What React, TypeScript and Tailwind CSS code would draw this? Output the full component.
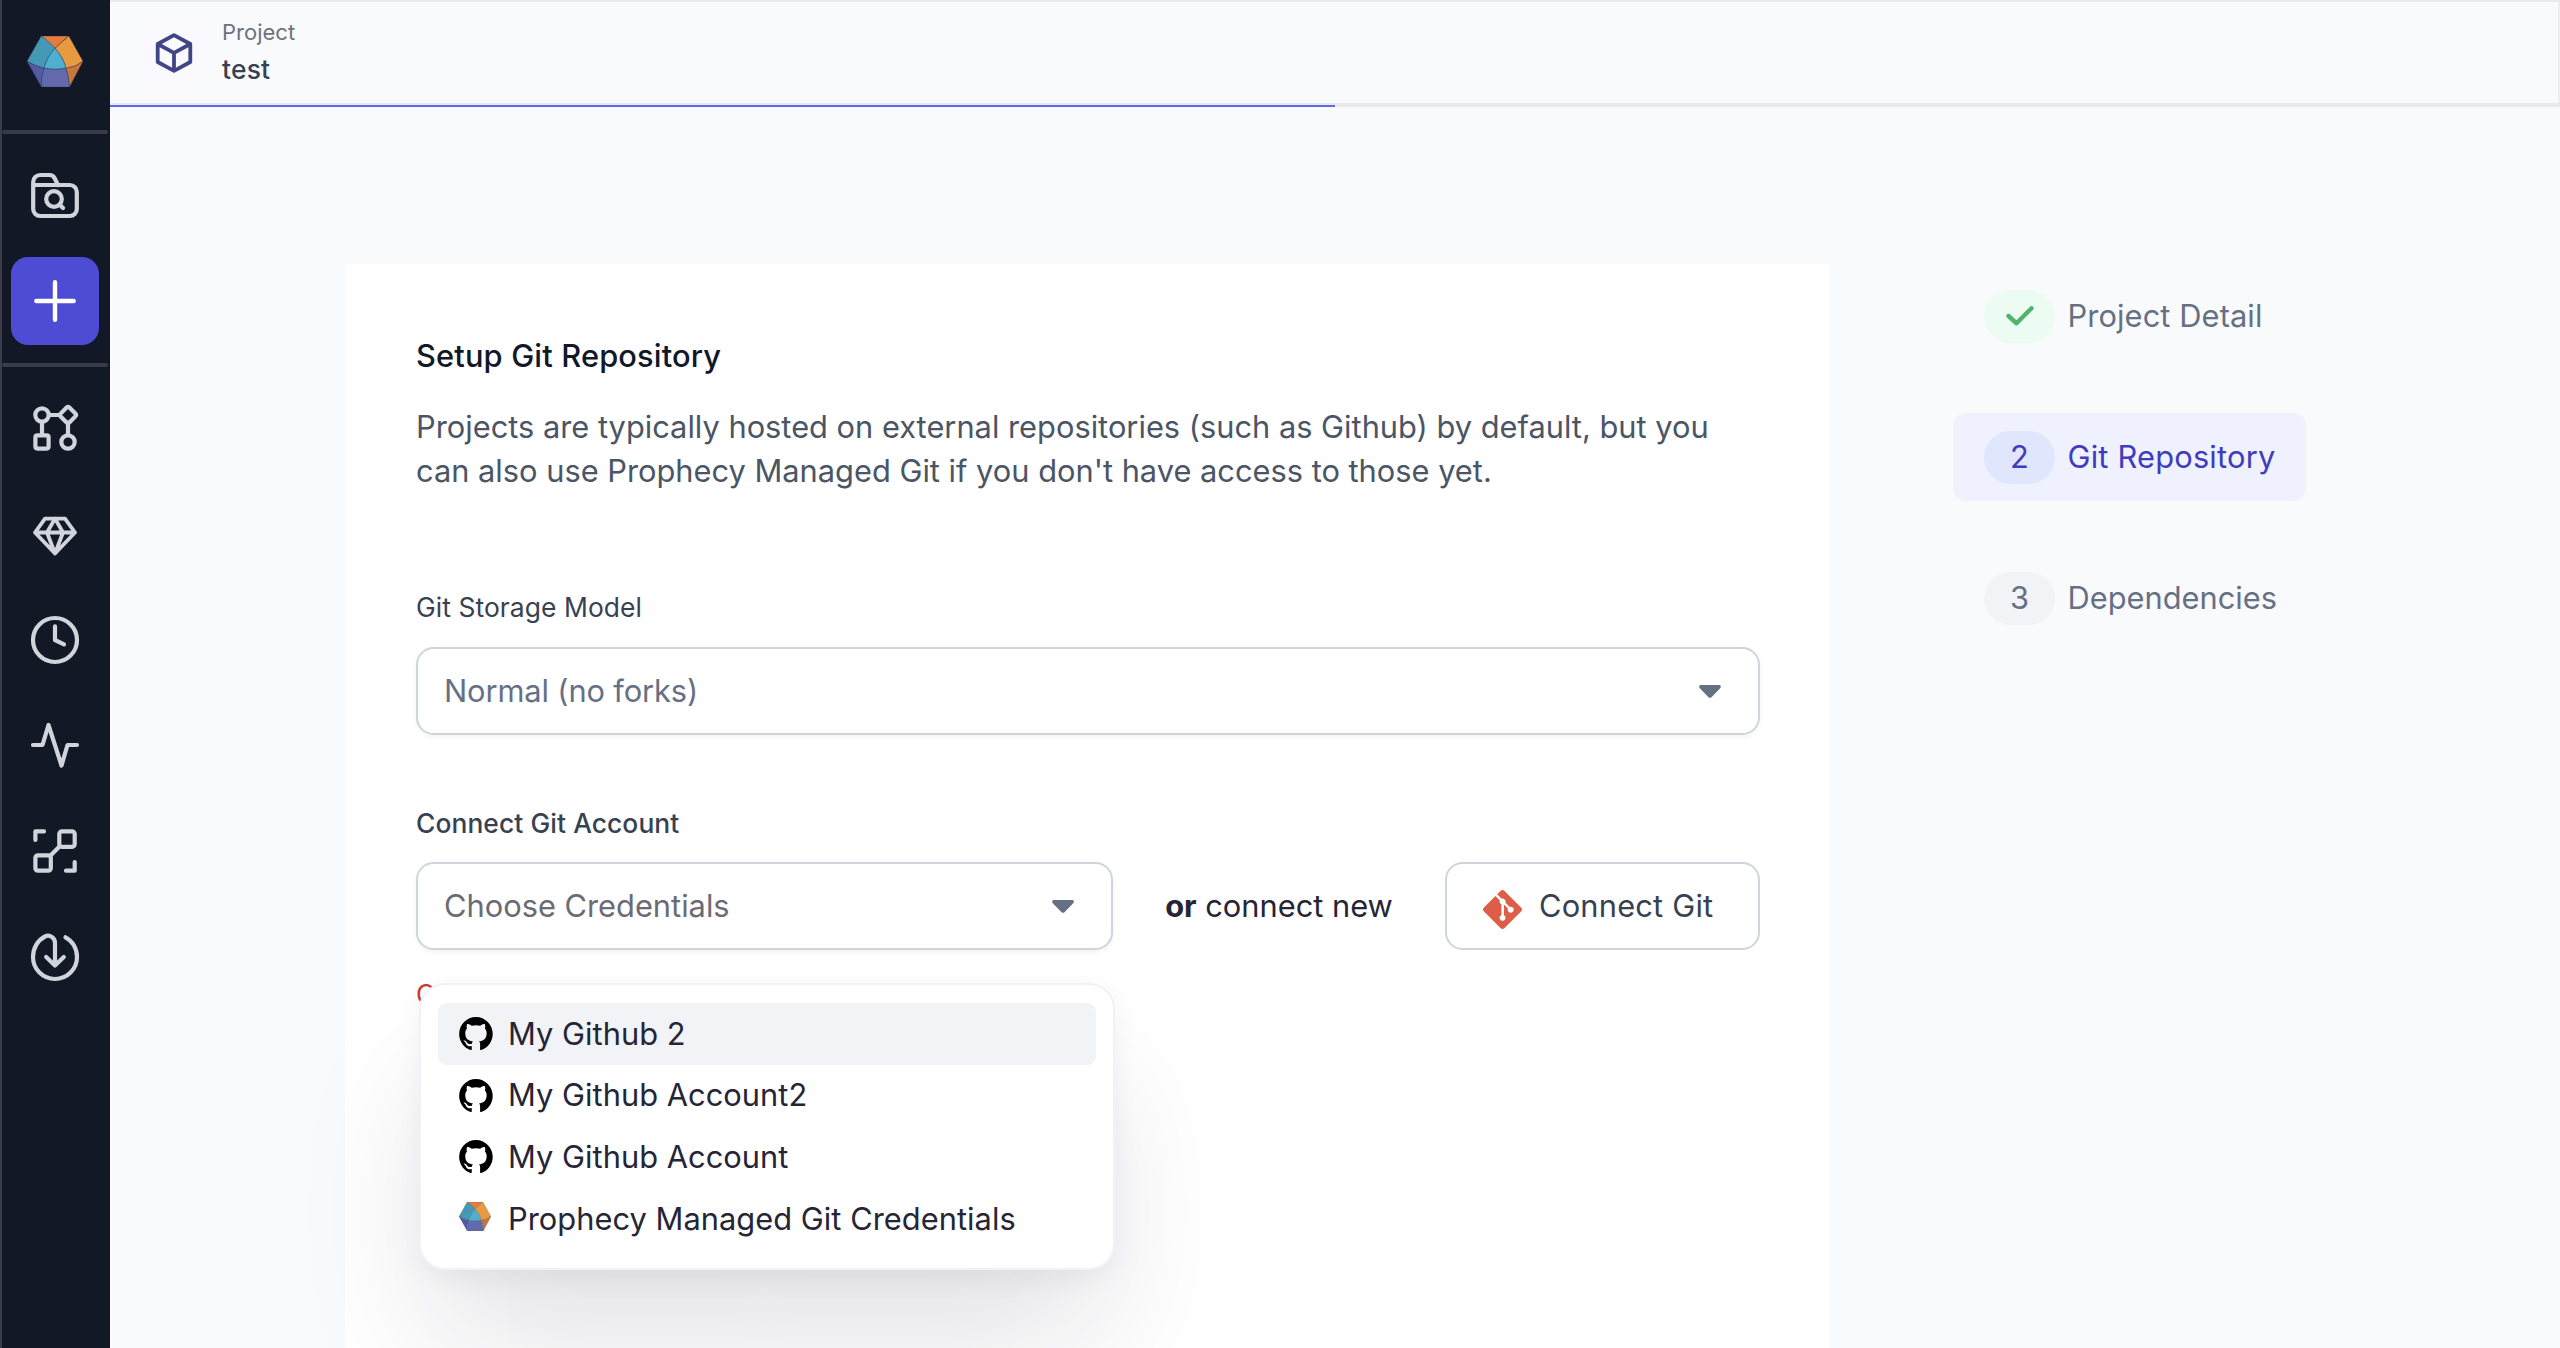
import React from "react";
import { SiGit } from "react-icons/si";

const FONT = "font-['Inter',sans-serif]";

function Logo({ className }: { className: string }) {
  return (
    <svg className={className} viewBox="0 0 56 51">
      <g stroke="#33405f" strokeWidth="0.4" strokeLinejoin="round">
        <path d="M14.5 0H41.5L28 12.3Z" fill="#e47d3c" />
        <path d="M41.8 0L56 25.3Q48 31.5 39 32.2Q36 21 28 12.3Z" fill="#e89a40" />
        <path d="M56 25.3L42.5 51Q42 41 39 32.2Q48 31.5 56 25.3Z" fill="#c9763a" />
        <path d="M14.2 0Q22 5 28 12.3Q20 21 17 32.2Q8 30 0 25.3Z" fill="#4499b5" />
        <path d="M28 12.3Q36 21 39 32.2Q28 34.5 17 32.2Q20 21 28 12.3Z" fill="#4eafd0" />
        <path d="M0 25.3Q8 30 17 32.2Q14 41 14.5 51Z" fill="#5459a5" />
        <path d="M17 32.2Q28 34.5 39 32.2Q42 41 42.5 51H14.5Q14 41 17 32.2Z" fill="#6269ad" />
      </g>
    </svg>
  );
}

function NavIcon({ box, width = 4.2, children }: { box: string; width?: number; children: React.ReactNode }) {
  return (
    <svg
      className="block size-[52px]"
      viewBox={box}
      fill="none"
      stroke="#d1d5db"
      strokeWidth={width}
      strokeLinecap="round"
      strokeLinejoin="round"
    >
      {children}
    </svg>
  );
}

function Sidebar() {
  return (
    <aside className="flex h-full w-[110px] shrink-0 flex-col border-l-2 border-[#3b3e4a] bg-[#131827]">
      <div className="flex h-[130px] w-[106px] justify-center pt-9">
        <Logo className="block h-[51px] w-14" />
      </div>
      <div className="h-1 w-[106px] rounded-sm bg-[#393b48]" />
      <div className="flex h-[229px] w-[106px] flex-col items-center pt-[35px]">
        <NavIcon box="29 169 52 52">
          <path d="M33.2 185V182a7 7 0 0 1 7-7H49.5c2.5 0 4 1 5 3L58 185M33.2 185H69.8a7 7 0 0 1 7 7V209a7 7 0 0 1-7 7H40.2a7 7 0 0 1-7-7Z" />
          <circle cx="54" cy="199" r="7.8" />
          <path d="M60 205L63 208" />
        </NavIcon>
        <button className="mt-9 flex size-[88px] items-center justify-center rounded-[17px] bg-[#4e4bd4]">
          <svg className="block size-[52px]" viewBox="0 0 52 52" stroke="#fff" strokeWidth="4.4" strokeLinecap="round">
            <path d="M26 7.3V44.7M7.3 26H44.7" />
          </svg>
        </button>
      </div>
      <div className="h-1 w-[106px] rounded-sm bg-[#393b48]" />
      <nav className="flex w-[106px] flex-col items-center gap-[53.8px] pt-[35px]">
        <NavIcon box="29 402 52 52">
          <circle cx="42" cy="415" r="6.7" />
          <circle cx="68" cy="442" r="6.7" />
          <rect x="35.4" y="435.4" width="13.2" height="13.2" rx="2" />
          <path d="M66.6 407.6a2 2 0 0 1 2.8 0L75.400 413.600a2 2 0 0 1 0 2.800L69.400 422.400a2 2 0 0 1-2.800 0L60.600 416.400a2 2 0 0 1 0-2.800Z" />
          <path d="M49 415H60M42 422V435M68 422.500V435" />
        </NavIcon>
        <NavIcon box="29 508 52 52" width={3.8}>
          <path d="M45 518.600H65L75 532.500L55 553.500L35 532.500ZM35 532.500H75M55 518.600L47 532.500L55 553.500L63 532.500Z" />
        </NavIcon>
        <NavIcon box="29 613.600 52 52">
          <circle cx="55" cy="639.600" r="22" />
          <path d="M55 626V639.600L64 644" />
        </NavIcon>
        <NavIcon box="29 719.500 52 52">
          <path d="M33 745.500H42.500L48.500 725.500L61.500 766L67.500 745.500H77" />
        </NavIcon>
        <NavIcon box="29 825 52 52">
          <path d="M35.400 840V831.400H44M66 870.700H74.700V862M51 855L59 847" />
          <rect x="59.300" y="831.400" width="15.400" height="15.400" rx="2.500" />
          <rect x="35.400" y="855.300" width="15.400" height="15.400" rx="2.500" />
        </NavIcon>
        <NavIcon box="29 931 52 52">
          <path d="M65.500 937.300C72.500 941 77 948.500 77 957A22 22 0 0 1 33 957C33 948 38 940 45 936.500C50 934 55 938 55 943V965M46.200 957L55 965.500L63.800 957" />
        </NavIcon>
      </nav>
    </aside>
  );
}

function Header() {
  return (
    <header className="h-[107px] shrink-0 border-t-2 border-[#e9eaed]">
      <div className="flex h-[101px] border-r-2 border-[#eceef1] pl-[30px] pt-4">
        <div className="flex size-[68px] items-center justify-center rounded-lg bg-[#f9f9fe]">
          <svg className="mt-[2px] block size-11" viewBox="152 31 44 44" fill="none" stroke="#3f4585" strokeWidth="3.800" strokeLinejoin="round" strokeLinecap="round">
            <path d="M174 35.200L190.300 44V62L174 70.800L157.700 62V44ZM157.700 44L174 52.800L190.300 44M174 52.800V70.800" />
          </svg>
        </div>
        <div className="-mt-1 ml-[14px] flex flex-col">
          <span className="text-[22px] leading-9 text-[#6b7280]">Project</span>
          <span className="text-[26.400px] font-medium leading-[38px] tracking-[0.2px] text-[#374151]">test</span>
        </div>
      </div>
      <div className="flex h-1 items-end border-t-2 border-[#e9eaed]">
        <div className="h-[2px] w-[1225px] bg-[#6468e6]" />
        <div className="h-[2px] flex-1 bg-[#e9eaed]" />
      </div>
    </header>
  );
}

function Caret() {
  return (
    <svg className="block h-[13px] w-[22px]" viewBox="0 0 22 13" fill="#667085">
      <path d="M1.200 0H20.800Q22.500 1 21.400 3L12.500 12.200Q11 13.500 9.500 12.200L0.600 3Q-0.500 1 1.200 0Z" />
    </svg>
  );
}

function Select({ text, className }: { text: string; className: string }) {
  return (
    <div className={"flex h-[88px] items-center justify-between rounded-[17.600px] border-2 border-[#d0d5db] bg-white pl-[26px] pr-[37px] shadow-[0_2px_4px_rgba(16,24,40,0.05)] " + className}>
      <span>{text}</span>
      <Caret />
    </div>
  );
}

function Github() {
  return (
    <svg className="block h-[33px] w-[34px]" viewBox="0 0 98 96" fill="#000">
      <path
        fillRule="evenodd"
        clipRule="evenodd"
        d="M48.854 0C21.839 0 0 22 0 49.217c0 21.756 13.993 40.172 33.405 46.690 2.427.490 3.316-1.059 3.316-2.362 0-1.141-.080-5.052-.080-9.127-13.590 2.934-16.420-5.867-16.420-5.867-2.184-5.704-5.420-7.170-5.420-7.170-4.448-3.015.324-3.015.324-3.015 4.934.326 7.523 5.052 7.523 5.052 4.367 7.496 11.404 5.378 14.235 4.074.404-3.178 1.699-5.378 3.074-6.600-10.839-1.141-22.243-5.378-22.243-24.283 0-5.378 1.940-9.778 5.014-13.200-.485-1.222-2.184-6.275.486-13.038 0 0 4.125-1.304 13.426 5.052a46.970 46.970 0 0 1 12.214-1.630c4.125 0 8.330.571 12.213 1.630 9.302-6.356 13.427-5.052 13.427-5.052 2.670 6.763.970 11.816.485 13.038 3.155 3.422 5.015 7.822 5.015 13.200 0 18.905-11.404 23.060-22.324 24.283 1.780 1.548 3.316 4.481 3.316 9.126 0 6.600-.080 11.897-.080 13.526 0 1.304.890 2.853 3.316 2.364 19.412-6.520 33.405-24.935 33.405-46.691C97.707 22 75.788 0 48.854 0z"
      />
    </svg>
  );
}

const OPTIONS = ["My Github 2", "My Github Account2", "My Github Account", "Prophecy Managed Git Credentials"];

function CredentialMenu() {
  return (
    <div className="absolute left-[3px] top-[6px] w-[696px] rounded-[26px] border-2 border-[#f1f2f7] bg-white px-[17px] pb-[19px] pt-[18px] text-[#252536] shadow-[0_84px_140px_-18px_rgba(26,26,51,0.13),0_10px_26px_rgba(26,26,51,0.05)]">
      {OPTIONS.map((label, i) => (
        <div
          key={label}
          className={"flex h-[61.600px] items-center rounded-[9px] pl-[21px] " + (i === 0 ? "bg-[#f2f3f7]" : "")}
        >
          <div className="w-[49px]">
            {i < 3 ? <Github /> : <Logo className="-mt-[5px] block h-[29px] w-8" />}
          </div>
          <span className="tracking-[0.04px]">{label}</span>
        </div>
      ))}
    </div>
  );
}

function SetupCard() {
  return (
    <section className="w-[1485px] bg-white px-[71px] pt-[69.500px] text-[30.800px] leading-[44px]">
      <h1 className="font-medium tracking-[0.15px] text-[#111827]">Setup Git Repository</h1>
      <p className="mt-[27.500px] whitespace-nowrap text-[#4b5565]">
        Projects are typically hosted on external repositories (such as Github) by default, but you
        <br />
        can also use Prophecy Managed Git if you don't have access to those yet.
      </p>
      <div className="mt-[97px] text-[26.400px] leading-[35px] tracking-[0.08px] text-[#374151]">Git Storage Model</div>
      <Select text="Normal (no forks)" className="mt-[22px] w-[1344px] tracking-[-0.12px] text-[#667085]" />
      <div className="mt-[71px] text-[26.400px] font-medium leading-[35px] tracking-[0.08px] text-[#374151]">Connect Git Account</div>
      <div className="mt-[21px] flex w-[1344px] items-center justify-between">
        <Select text="Choose Credentials" className="w-[697px] text-[#6b6b76]" />
        <span className="whitespace-nowrap text-[#252536]">
          <b className="font-bold">or</b> connect new
        </span>
        <button className="flex h-[88px] w-[315px] items-center rounded-[17.600px] border-2 border-[#d0d5db] bg-white pl-9 text-[#374151]">
          <SiGit className="mt-[6px] block size-[39px] text-[#de5d46]" />
          <span className="ml-[17px] tracking-[0.2px]">Connect Git</span>
        </button>
      </div>
      <div className="relative mt-[27px]">
        <div className="text-[26.400px] leading-[35px] text-[#d0392b]">C</div>
        <CredentialMenu />
      </div>
    </section>
  );
}

function Steps() {
  return (
    <ol className="mt-2 flex w-[353px] flex-col gap-[53px] text-[30.800px] leading-[44px]">
      <li className="flex h-[88px] items-center gap-[12.500px] rounded-[13px] pl-[31px] text-[#667085]">
        <span className="flex h-[53px] w-[71px] items-center justify-center rounded-full bg-[#edfcf3]">
          <svg className="block h-6 w-8" viewBox="2003.500 305.500 32 24" fill="none" stroke="#50b46f" strokeWidth="4.400" strokeLinecap="round" strokeLinejoin="round">
            <path d="M2008 317.500L2016 324.800L2031 309.800" />
          </svg>
        </span>
        <span className="tracking-[0.1px]">Project Detail</span>
      </li>
      <li className="flex h-[88px] items-center gap-[12.500px] rounded-[13px] bg-[#f0f1ff] pl-[31px] text-[#403cbd]">
        <span className="flex h-[53px] w-[71px] items-center justify-center rounded-full bg-[#e0e6fb]">2</span>
        <span className="tracking-[0.2px]">Git Repository</span>
      </li>
      <li className="flex h-[88px] items-center gap-[12.500px] rounded-[13px] pl-[31px] text-[#667085]">
        <span className="flex h-[53px] w-[71px] items-center justify-center rounded-full bg-[#f2f3f7]">3</span>
        <span>Dependencies</span>
      </li>
    </ol>
  );
}

export default function App() {
  return (
    <div className={"flex h-[1348px] w-[2560px] overflow-hidden bg-[#f9fafc] antialiased " + FONT}>
      <Sidebar />
      <div className="flex min-w-0 flex-1 flex-col">
        <Header />
        <main className="flex flex-1 gap-[123px] pl-[235px] pt-[157px]">
          <SetupCard />
          <Steps />
        </main>
      </div>
    </div>
  );
}
